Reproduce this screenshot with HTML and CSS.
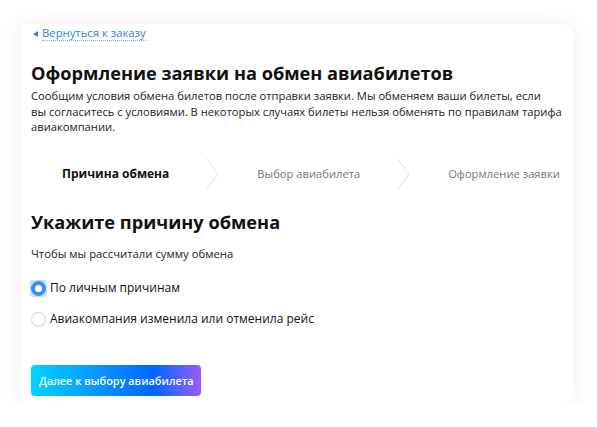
FILE: index.html
```html
<!DOCTYPE html>
<html lang="ru">
<head>
<meta charset="utf-8">
<link rel="stylesheet" href="styles.css">
</head>
<body>
<main class="card">
  <a class="back" href="#"><span class="back-arrow"></span><span class="back-text">Вернуться к заказу</span></a>
  <h1 class="title">Оформление заявки на обмен авиабилетов</h1>
  <p class="lead">Сообщим условия обмена билетов после отправки заявки. Мы обменяем ваши билеты, если<br>вы согласитесь с условиями. В некоторых случаях билеты нельзя обменять по правилам тарифа авиакомпании.</p>
  <ol class="steps">
    <li class="step step-active">Причина обмена</li>
    <li class="chev"><svg width="14" height="32" viewBox="0 0 14 32"><path d="M1 1 L12 16 L1 31" fill="none" stroke="#e2e2e2" stroke-width="1"/></svg></li>
    <li class="step">Выбор авиабилета</li>
    <li class="chev"><svg width="14" height="32" viewBox="0 0 14 32"><path d="M1 1 L12 16 L1 31" fill="none" stroke="#e2e2e2" stroke-width="1"/></svg></li>
    <li class="step">Оформление заявки</li>
  </ol>
  <h2 class="subtitle">Укажите причину обмена</h2>
  <p class="hint">Чтобы мы рассчитали сумму обмена</p>
  <div class="options">
    <label class="option"><span class="focus"><span class="radio radio-on"><span class="radio-dot"></span></span></span><span class="option-text">По личным причинам</span></label>
    <label class="option"><span class="focus focus-off"><span class="radio"></span></span><span class="option-text">Авиакомпания изменила или отменила рейс</span></label>
  </div>
  <button class="next" type="button">Далее к выбору авиабилета</button>
</main>
</body>
</html>
```
FILE: styles.css
```css
* { box-sizing: border-box; }
html, body { margin: 0; padding: 0; background: #fff; }
body {
  font-family: "Open Sans", "Noto Sans", sans-serif;
  color: #111;
  padding: 24px 0 0 21px;
}
.card {
  width: 552px;
  height: 380px;
  background: #fff;
  border-radius: 0 10px 10px 0;
  box-shadow: 0 0 22px rgba(0, 0, 0, 0.07);
  padding: 2px 6px 0 10px;
  display: flex;
  flex-direction: column;
  align-items: flex-start;
}
.back {
  display: flex;
  align-items: center;
  gap: 4px;
  text-decoration: none;
  color: #2f7fe8;
  font-size: 11.3px;
  line-height: 16px;
  margin-left: 2px;
}
.back-arrow {
  width: 0; height: 0;
  border-top: 3.5px solid transparent;
  border-bottom: 3.5px solid transparent;
  border-right: 5px solid #2f7fe8;
}
.back-text {
  border-bottom: 1px dotted #7fb0f0;
  line-height: 14px;
}
.title {
  margin: 19px 0 0 0;
  font-size: 18.2px;
  line-height: 26px;
  font-weight: 700;
  color: #111;
}
.lead {
  margin: 2px 0 0 0;
  font-size: 11.2px;
  line-height: 15.5px;
  color: #222;
}
.steps {
  list-style: none;
  margin: 23px 0 0 0;
  padding: 0 0 0 31px;
  display: flex;
  align-items: center;
  gap: 37px;
  height: 32px;
}
.step {
  font-size: 11.2px;
  color: #777;
  white-space: nowrap;
}
.step-active { font-weight: 700; color: #111; font-size: 12px; }
.chev { display: flex; }
.subtitle {
  margin: 19px 0 0 0;
  font-size: 18.2px;
  line-height: 26px;
  font-weight: 700;
  color: #111;
}
.hint {
  margin: 11px 0 0 0;
  font-size: 11.3px;
  line-height: 16px;
  color: #222;
}
.options {
  display: flex;
  flex-direction: column;
  gap: 14px;
  margin-top: 18px;
}
.option {
  display: flex;
  align-items: center;
  gap: 3px;
  font-size: 12px;
  line-height: 16px;
  color: #111;
  margin-left: -1px;
}
.focus {
  width: 17px; height: 17px;
  border-radius: 3px;
  background: #c9dffc;
  display: flex;
  align-items: center;
  justify-content: center;
}
.focus-off { background: transparent; }
.radio {
  width: 15px; height: 15px;
  border-radius: 50%;
  border: 1px solid #c8d6ea;
  background: #fff;
  display: flex;
  align-items: center;
  justify-content: center;
}
.radio-on {
  background: #3a8df5;
  border-color: #3a8df5;
}
.radio-dot {
  width: 7px; height: 7px;
  border-radius: 50%;
  background: #fff;
}
.next {
  margin-top: 37px;
  width: 170px;
  height: 31px;
  border: 0;
  border-radius: 4px;
  background: linear-gradient(90deg, #00d4ff 0%, #0a8cff 45%, #0066ff 72%, #9a5cf5 100%);
  color: #fff;
  font-family: "Open Sans", sans-serif;
  font-size: 10.9px;
  font-weight: 600;
  padding: 0 8px;
  text-align: left;
  white-space: nowrap;
}
```
